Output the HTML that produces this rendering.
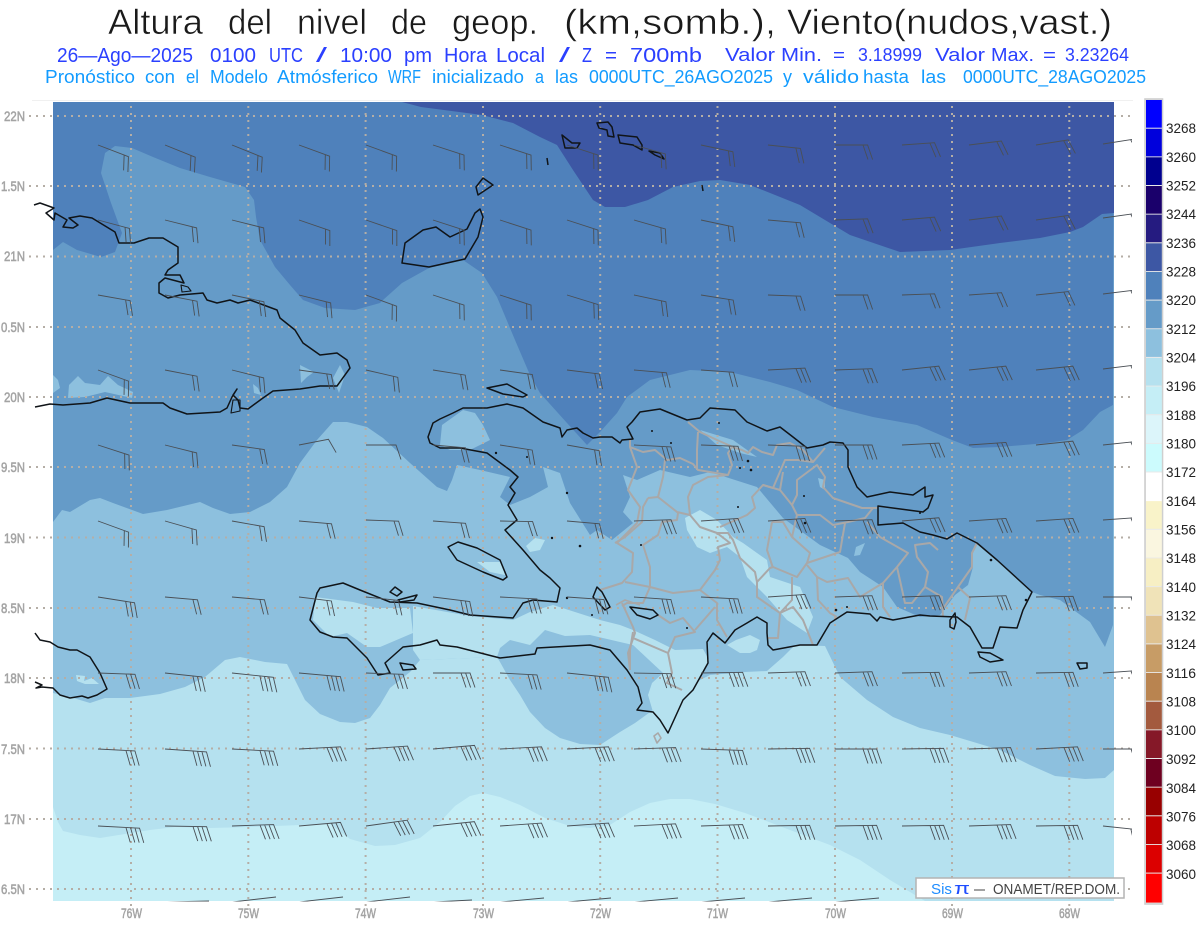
<!DOCTYPE html>
<html lang="es"><head><meta charset="utf-8"><title>Altura del nivel de geop.</title>
<style>html,body{margin:0;padding:0;background:#fff}svg{display:block;font-family:"Liberation Sans",sans-serif}</style></head>
<body>
<svg width="1200" height="927" viewBox="0 0 1200 927" xmlns="http://www.w3.org/2000/svg">
<defs>
<clipPath id="m"><rect x="53" y="102" width="1061" height="799"/></clipPath>
<clipPath id="bc"><rect x="53" y="102" width="1079" height="799.5"/></clipPath>
<path id="b1" d="M0,0H30L35,14.5"/>
<path id="b2" d="M0,0H32.6L37.6,14.5M28,0L33,14.5"/>
<path id="b3" d="M0,0H37L42,14.5M32.6,0L37.6,14.5M28,0L33,14.5"/>
<path id="b4" d="M0,0H41.6L46.6,14.5M37,0L42,14.5M32.6,0L37.6,14.5M28,0L33,14.5"/>
</defs>
<rect width="1200" height="927" fill="#fff"/>
<!-- titles -->
<g fill="#1a1a1a" font-size="35" stroke="#fff" stroke-width=".55" paint-order="fill">
<text x="108" y="34" textLength="95" lengthAdjust="spacingAndGlyphs">Altura</text>
<text x="228" y="34" textLength="44" lengthAdjust="spacingAndGlyphs">del</text>
<text x="297" y="34" textLength="70" lengthAdjust="spacingAndGlyphs">nivel</text>
<text x="391" y="34" textLength="36" lengthAdjust="spacingAndGlyphs">de</text>
<text x="452" y="34" textLength="86" lengthAdjust="spacingAndGlyphs">geop.</text>
<text x="564" y="34" textLength="212" lengthAdjust="spacingAndGlyphs">(km,somb.),</text>
<text x="787" y="34" textLength="325" lengthAdjust="spacingAndGlyphs">Viento(nudos,vast.)</text>
</g>
<g fill="#2b40ff" font-size="20">
<text x="57" y="62" textLength="136" lengthAdjust="spacingAndGlyphs">26—Ago—2025</text>
<text x="210" y="62" textLength="46" lengthAdjust="spacingAndGlyphs">0100</text>
<text x="269" y="62" textLength="34" lengthAdjust="spacingAndGlyphs">UTC</text>
<text x="316" y="62" textLength="11" lengthAdjust="spacingAndGlyphs">/</text>
<text x="340" y="62" textLength="52" lengthAdjust="spacingAndGlyphs">10:00</text>
<text x="404" y="62" textLength="28" lengthAdjust="spacingAndGlyphs">pm</text>
<text x="444" y="62" textLength="43" lengthAdjust="spacingAndGlyphs">Hora</text>
<text x="496" y="62" textLength="49" lengthAdjust="spacingAndGlyphs">Local</text>
<text x="559" y="62" textLength="11" lengthAdjust="spacingAndGlyphs">/</text>
<text x="582" y="62" textLength="10" lengthAdjust="spacingAndGlyphs">Z</text>
<text x="605" y="62" textLength="12" lengthAdjust="spacingAndGlyphs">=</text>
<text x="630" y="62" textLength="72" lengthAdjust="spacingAndGlyphs">700mb</text>
</g>
<g fill="#2b40ff" font-size="18">
<text x="725" y="61" textLength="50" lengthAdjust="spacingAndGlyphs">Valor</text>
<text x="781" y="61" textLength="41" lengthAdjust="spacingAndGlyphs">Min.</text>
<text x="833" y="61" textLength="12" lengthAdjust="spacingAndGlyphs">=</text>
<text x="858" y="61" textLength="64" lengthAdjust="spacingAndGlyphs">3.18999</text>
<text x="935" y="61" textLength="50" lengthAdjust="spacingAndGlyphs">Valor</text>
<text x="991" y="61" textLength="43" lengthAdjust="spacingAndGlyphs">Max.</text>
<text x="1043" y="61" textLength="13" lengthAdjust="spacingAndGlyphs">=</text>
<text x="1065" y="61" textLength="64" lengthAdjust="spacingAndGlyphs">3.23264</text>
</g>
<g fill="#129bff" font-size="18">
<text x="45" y="83" textLength="90" lengthAdjust="spacingAndGlyphs">Pronóstico</text>
<text x="145" y="83" textLength="30" lengthAdjust="spacingAndGlyphs">con</text>
<text x="186" y="83" textLength="13" lengthAdjust="spacingAndGlyphs">el</text>
<text x="210" y="83" textLength="58" lengthAdjust="spacingAndGlyphs">Modelo</text>
<text x="277" y="83" textLength="101" lengthAdjust="spacingAndGlyphs">Atmósferico</text>
<text x="388" y="83" textLength="33" lengthAdjust="spacingAndGlyphs">WRF</text>
<text x="432" y="83" textLength="92" lengthAdjust="spacingAndGlyphs">inicializado</text>
<text x="535" y="83" textLength="9" lengthAdjust="spacingAndGlyphs">a</text>
<text x="555" y="83" textLength="23" lengthAdjust="spacingAndGlyphs">las</text>
<text x="589" y="83" textLength="184" lengthAdjust="spacingAndGlyphs">0000UTC_26AGO2025</text>
<text x="783" y="83" textLength="9" lengthAdjust="spacingAndGlyphs">y</text>
<text x="803" y="83" textLength="56" lengthAdjust="spacingAndGlyphs">válido</text>
<text x="863" y="83" textLength="46" lengthAdjust="spacingAndGlyphs">hasta</text>
<text x="921" y="83" textLength="25" lengthAdjust="spacingAndGlyphs">las</text>
<text x="963" y="83" textLength="183" lengthAdjust="spacingAndGlyphs">0000UTC_28AGO2025</text>
</g>
<path d="M32,100.5H1133" stroke="#f0f0f0" fill="none"/>
<!-- shading -->
<g clip-path="url(#m)">
<rect x="53" y="102" width="1061" height="799" fill="#c5eef6"/>
<polygon fill="#b5e1ef" points="53,807 58,822 63,831 80,835 100,838 125,834 150,830 175,827 210,828 250,827 300,825 330,824 350,839 375,846 395,845 420,838 440,822 455,806 470,796 483,793 500,797 520,805 545,818 570,826 590,828 610,825 630,812 650,803 670,799 690,799 715,804 745,813 790,830 830,845 860,860 890,880 925,901 1114,901 1114,102 53,102"/>
<polygon fill="#8dc0de" points="53,102 53,693 70,697 90,703 105,698 130,698 160,694 185,687 205,677 225,660 240,657 265,662 287,664 295,680 305,700 320,714 340,722 355,723 370,718 380,705 390,688 400,680 410,672 420,660 497,657 500,662 510,680 520,695 530,712 545,728 560,738 580,744 600,745 620,732 635,723 653,710 680,690 710,675 745,672 767,671 783,657 795,645 825,646 840,677 867,700 893,717 920,728 950,735 1000,750 1030,765 1055,776 1085,779 1105,778 1114,770 1114,102"/>
<!-- b5 patches -->
<g fill="#b5e1ef">
<polygon points="413,606 470,616 513,620 530,612 553,605 575,612 600,620 620,625 633,630 655,640 675,650 703,649 709,660 693,690 668,733 653,712 648,695 652,683 663,673 633,645 620,642 590,635 565,636 545,630 530,645 510,640 500,648 497,657 420,660 413,650"/>
<polygon points="315,597 353,602 377,608 410,608 413,633 380,647 367,647 347,633 330,637 313,620"/>
<polygon points="477,562 500,562 505,575 490,572"/>
<polygon points="526,546 535,538 545,540 540,550 530,552"/>
<polygon points="685,518 700,510 717,520 733,537 743,543 757,553 767,560 770,577 800,587 813,617 807,633 787,620 767,597 747,577 740,557 727,547 710,553 697,547 687,530"/>
<polygon points="727,645 736,640 750,635 760,640 757,650 750,653 740,653"/>
<polygon points="76,675 85,676 84,681 92,678 99,684 85,684 77,681"/>
</g>
<polygon fill="#659bc8" points="53,102 53,522 62,510 70,512 90,500 100,498 113,503 143,514 167,510 200,502 213,508 230,514 250,512 270,502 287,487 300,463 317,440 333,422 347,422 367,427 383,438 410,463 437,487 447,491 452,480 457,465 480,470 510,477 500,497 510,505 530,497 548,487 543,467 560,473 570,503 590,535 597,530 612,540 633,523 623,512 630,497 623,475 637,480 660,470 690,477 710,472 757,487 783,518 820,545 848,558 860,572 883,587 897,607 920,617 940,615 955,595 968,585 973,567 972,553 978,543 997,560 1032,592 1040,595 1060,600 1090,622 1105,647 1113,625 1114,102"/>
<g fill="#8dc0de">
<polygon points="442,425 463,410 475,413 483,425 490,440 470,450 450,450 440,445"/>
<polygon points="53,375 58,380 60,388 53,393"/>
<polygon points="68,398 69,385 78,376 85,383 100,385 108,376 118,385 133,392 132,398 105,392 85,397"/>
<polygon points="300,365 314,372 307,377 301,383"/>
<polygon points="333,378 340,365 345,375 339,393"/>
<polygon points="253,384 258,388 261,395 254,393"/>
<polygon points="700,430 733,440 757,457 740,453 717,445"/>
<polygon points="856,547 865,543 860,555 854,556"/>
<polygon points="818,478 825,480 825,490 820,487"/>
</g>
<polygon fill="#4f81bb" points="53,102 53,250 63,242 77,250 101,257 115,252 122,233 111,203 101,173 105,153 115,146 132,148 153,157 180,168 210,177 245,187 254,200 256,217 260,240 275,267 290,285 303,300 325,308 355,310 380,303 383,300 402,283 429,268 463,260 482,273 497,297 515,340 530,375 540,393 567,423 587,445 600,432 617,413 627,397 650,380 690,370 730,372 770,382 797,390 833,407 873,417 917,425 952,440 973,448 1000,447 1047,443 1067,440 1083,430 1100,412 1113,405 1114,102"/>
<polygon fill="#3d57a4" points="402,102 421,107 482,115 513,123 540,137 557,145 573,170 593,200 605,207 625,207 648,200 673,187 700,181 720,180 750,185 800,205 850,235 900,252 950,250 1000,243 1040,238 1070,232 1083,227 1102,214 1114,213 1114,102"/>
</g>
<!-- grid -->
<g stroke="#b5aea6" stroke-width="2" stroke-dasharray="2 5" fill="none">
<path d="M29,116H1132M29,186H1132M29,256.5H1132M29,327H1132M29,397H1132M29,467H1132M29,537.5H1132M29,608H1132M29,678H1132M29,748.5H1132M29,819H1132M29,889H1132"/>
<path d="M131,106V907M248.3,106V907M365.6,106V907M483,106V907M600.2,106V907M717.5,106V907M835,106V907M952,106V907M1069.3,106V907"/>
</g>
<!-- provinces -->
<g fill="none" stroke="#a9a8a8" stroke-width="2" stroke-linejoin="round">
<path d="M630,440L630,447L637,467L628,490L640,507L637,523L617,543L633,553L632,572L622,583L600,590M622,603L633,627L635,633L628,653L630,670"/>
<path d="M630,447L643,452L655,450L667,460L680,458L693,464L698,470L710,472L728,475L732,465L728,453L732,447L742,450L748,453L753,447L762,452L773,455L777,445L790,443L803,450L813,462L825,448"/>
<path d="M688,422L700,432L717,440L733,447M698,432L697,450L697,470M665,460L663,477L658,497"/>
<path d="M648,498L643,507L642,522L625,537L615,543M648,498L658,497L677,512L690,515L688,497L693,485L708,477L728,475"/>
<path d="M690,515L700,527L717,533L728,533L733,540L740,558L755,572L757,582L770,568L773,567L797,577L807,563"/>
<path d="M678,513L677,520L662,522L658,535L643,545L650,567L650,587L673,593L700,590L715,570L720,560L718,547L730,543L717,533"/>
<path d="M625,582L650,587L643,603L627,603L622,606M700,590L717,603L717,620L727,637"/>
<path d="M658,615L670,623L683,618L695,632L675,637L668,653L672,673L667,683L682,690M715,607L695,630M633,632L630,650L630,670M633,638L668,653"/>
<path d="M720,527L747,515L755,508L752,497L763,485L773,488L785,460L798,460L813,462"/>
<path d="M763,485L780,490L783,472M780,490L792,505L797,495L797,480L817,465L825,477L823,487L833,498L862,508L877,508"/>
<path d="M792,505L797,515L792,537L810,553L807,563L840,552L845,523M797,515L820,515L833,525L848,522L865,518L873,508"/>
<path d="M772,522L783,522L792,537M772,522L767,550L773,568"/>
<path d="M867,522L880,537L908,553L897,567L883,583L883,607L890,617M807,565L817,577L827,582L848,578L860,597L883,583"/>
<path d="M817,577L818,600L830,613L837,617M792,577L792,600L780,613L778,638L767,638M757,582L757,597L780,613L793,607L803,620L813,645"/>
<path d="M897,567L905,603L912,603L925,587L928,572L917,557L915,545L930,543L938,550M925,587L942,597L943,617M942,610L958,587L970,598L965,620M958,587L972,567L972,553L977,543"/>
<path d="M616,605L625,600L640,605" stroke-width="1.6"/>
<path d="M654,736L658,733L661,738L657,743Z" stroke-width="1.6"/>
</g>
<!-- coast -->
<g fill="none" stroke="#101418" stroke-width="1.5" stroke-linejoin="round">
<path d="M428,437L433,423L440,419L453,413L463,408L487,408L507,404L523,408L543,422L560,428L562,437L567,430L577,428L583,433L593,438L600,437L612,437L620,443L622,440L633,439L627,427L632,422L640,412L660,409L687,420L700,418L710,408L735,410L747,422L767,431L780,427L793,437L807,448L823,445L830,442L843,443L848,450L848,467L857,487L867,497L890,492L913,495L925,487L925,497L933,495L928,508L923,512L878,506L878,525L903,523L920,532L933,535L947,539L957,533L977,543L997,560L1032,592L1023,610L1017,628L1000,627L993,648L982,648L970,627L957,617L930,616L920,615L893,620L880,617L877,621L870,614L847,612L830,623L817,645L800,645L773,650L768,645L767,633L767,623L757,617L747,623L735,630L725,643L713,633L707,642L708,663L693,690L683,700L668,733L660,720L653,712L637,710L642,703L638,687L627,670L610,650L590,645L537,648L535,654L500,658L457,647L440,645L437,640L420,645L403,647L385,663L390,673L378,675L367,658L347,638L333,637L320,632L310,620L317,593L320,588L343,583L360,590L390,602L417,603L450,610L470,615L513,618L523,603L533,600L557,602L560,588L550,578L540,570L523,550L505,530L517,520L508,505L515,493L510,487L518,477L510,470L487,453L460,448L440,448L430,443Z"/>
<path d="M448,547L458,542L477,548L500,560L507,577L503,580L483,572L457,560Z"/>
<path d="M487,388L507,384L527,395L523,397L503,394Z"/>
<path d="M597,587L593,597L605,610L610,607L602,592Z"/>
<path d="M630,607L653,610L658,615L650,619L637,615Z"/>
<path d="M978,652L990,653L1003,660L990,662L980,657Z"/>
<path d="M955,613L950,620L950,627L954,629L956,622Z"/>
<path d="M390,592L395,587L402,592L397,596Z"/>
<path d="M398,600L417,595L414,600L400,602Z"/>
<path d="M400,663L413,665L416,669L403,670Z"/>
<path d="M1077,663L1087,663L1087,668L1080,669Z"/>
<path d="M34,205L40,203L54,208L46,213L54,220L55,213L67,220L63,227L73,228L78,225L69,218L80,216L92,218L115,232L119,243L134,243L149,238L163,238L178,247L178,263L168,270L165,275L180,275L184,283L165,278L159,283L159,293L168,298L180,295L203,293L207,300L217,303L230,300L238,303L250,300L277,310L280,318L295,330L303,343L320,355L337,353L347,360L350,368L337,386L320,386L300,389L273,391L263,398L248,409L240,408L238,400L233,395L237,389L232,397L227,408L220,412L187,414L170,408L163,403L143,403L130,403L107,398L90,403L63,405L50,404L35,407"/>
<path d="M233,400L240,400L240,411L231,413ZM181,285L188,287L191,291L182,292Z" stroke-width="1.1"/>
<path d="M480,209L483,217L478,237L465,259L429,267L402,263L405,243L423,230L436,227L450,237L467,229L475,213Z"/>
<path d="M483,178L493,185L478,195L476,187Z"/>
<path d="M562,135L572,143L580,143L577,148L565,148Z"/>
<path d="M597,123L608,122L612,127L614,137L608,136L607,130L599,128Z"/>
<path d="M618,135L637,137L642,145L642,150L633,145L620,143Z"/>
<path d="M649,151L660,153L664,159L655,155Z"/>
<path d="M35,633L40,640L50,642L58,647L70,650L77,650L90,657L100,673L107,689L97,695L88,698L82,696L70,698L60,695L53,688L42,687L36,688L42,685L35,682"/>
<path d="M547,158L548,165M702,185L703,191"/>
</g>
<g fill="#101418">
<circle cx="652" cy="431" r="1"/><circle cx="671" cy="443" r="1"/><circle cx="719" cy="423" r="1"/><circle cx="748" cy="461" r="1.3"/><circle cx="740" cy="468" r="1"/><circle cx="751" cy="470" r="1.3"/><circle cx="804" cy="496" r="1"/><circle cx="738" cy="507" r="1"/><circle cx="641" cy="545" r="1"/><circle cx="805" cy="523" r="1.3"/><circle cx="991" cy="560" r="1.3"/><circle cx="1026" cy="600" r="1.3"/><circle cx="836" cy="610" r="1.3"/><circle cx="847" cy="607" r="1"/><circle cx="920" cy="513" r="1"/><circle cx="496" cy="453" r="1.2"/><circle cx="527" cy="457" r="1"/><circle cx="567" cy="493" r="1.2"/><circle cx="552" cy="538" r="1.2"/><circle cx="580" cy="546" r="1.3"/><circle cx="567" cy="598" r="1.2"/><circle cx="592" cy="615" r="1"/><circle cx="687" cy="628" r="1"/>
</g>
<!-- barbs -->
<g clip-path="url(#bc)" fill="none" stroke="#4a4f55" stroke-width=".9">
<use href="#b2" transform="translate(98,145) rotate(21)"/><use href="#b2" transform="translate(165,145) rotate(22)"/><use href="#b2" transform="translate(232,145) rotate(22)"/><use href="#b2" transform="translate(299,145) rotate(20)"/><use href="#b2" transform="translate(366,145) rotate(20)"/><use href="#b2" transform="translate(433,145) rotate(18)"/><use href="#b2" transform="translate(500,145) rotate(18)"/><use href="#b2" transform="translate(567,145) rotate(18)"/><use href="#b2" transform="translate(634,145) rotate(16)"/><use href="#b2" transform="translate(701,145) rotate(12)"/><use href="#b2" transform="translate(768,145) rotate(6)"/><use href="#b2" transform="translate(835,145) rotate(0)"/><use href="#b2" transform="translate(902,145) rotate(-4)"/><use href="#b2" transform="translate(969,145) rotate(-7)"/><use href="#b2" transform="translate(1036,145) rotate(-9)"/><use href="#b2" transform="translate(1103,144) rotate(-9)"/>
<use href="#b2" transform="translate(98,220) rotate(15)"/><use href="#b2" transform="translate(165,220) rotate(14)"/><use href="#b2" transform="translate(232,220) rotate(14)"/><use href="#b2" transform="translate(299,220) rotate(19)"/><use href="#b2" transform="translate(366,220) rotate(19)"/><use href="#b2" transform="translate(433,220) rotate(18)"/><use href="#b2" transform="translate(500,220) rotate(18)"/><use href="#b2" transform="translate(567,220) rotate(18)"/><use href="#b2" transform="translate(634,220) rotate(16)"/><use href="#b2" transform="translate(701,220) rotate(12)"/><use href="#b2" transform="translate(768,220) rotate(5)"/><use href="#b2" transform="translate(835,220) rotate(-2)"/><use href="#b2" transform="translate(902,220) rotate(-5)"/><use href="#b2" transform="translate(969,220) rotate(-7)"/><use href="#b2" transform="translate(1036,220) rotate(-8)"/><use href="#b2" transform="translate(1103,218) rotate(-8)"/>
<use href="#b2" transform="translate(98,295) rotate(10)"/><use href="#b2" transform="translate(165,295) rotate(11)"/><use href="#b2" transform="translate(232,295) rotate(12)"/><use href="#b2" transform="translate(299,295) rotate(14)"/><use href="#b2" transform="translate(366,295) rotate(20)"/><use href="#b2" transform="translate(433,295) rotate(18)"/><use href="#b2" transform="translate(500,295) rotate(18)"/><use href="#b2" transform="translate(567,295) rotate(17)"/><use href="#b2" transform="translate(634,295) rotate(12)"/><use href="#b2" transform="translate(701,295) rotate(9)"/><use href="#b2" transform="translate(768,295) rotate(2)"/><use href="#b2" transform="translate(835,295) rotate(0)"/><use href="#b2" transform="translate(902,295) rotate(-2)"/><use href="#b2" transform="translate(969,295) rotate(-4)"/><use href="#b2" transform="translate(1036,295) rotate(-6)"/><use href="#b2" transform="translate(1103,294) rotate(-7)"/>
<use href="#b2" transform="translate(98,370) rotate(20)"/><use href="#b2" transform="translate(165,370) rotate(11)"/><use href="#b2" transform="translate(232,370) rotate(14)"/><use href="#b2" transform="translate(299,370) rotate(8)"/><use href="#b2" transform="translate(366,370) rotate(13)"/><use href="#b2" transform="translate(433,370) rotate(9)"/><use href="#b2" transform="translate(500,370) rotate(8)"/><use href="#b2" transform="translate(567,370) rotate(7)"/><use href="#b2" transform="translate(634,370) rotate(5)"/><use href="#b2" transform="translate(701,370) rotate(4)"/><use href="#b3" transform="translate(768,370) rotate(-3)"/><use href="#b3" transform="translate(835,370) rotate(-2)"/><use href="#b3" transform="translate(902,370) rotate(-6)"/><use href="#b3" transform="translate(969,370) rotate(-6)"/><use href="#b3" transform="translate(1036,370) rotate(-6)"/><use href="#b3" transform="translate(1103,369) rotate(-7)"/>
<use href="#b2" transform="translate(98,445) rotate(18)"/><use href="#b2" transform="translate(165,445) rotate(14)"/><use href="#b2" transform="translate(232,445) rotate(8)"/><use href="#b1" transform="translate(299,445) rotate(-11)"/><use href="#b1" transform="translate(366,445) rotate(0)"/><use href="#b2" transform="translate(433,445) rotate(5)"/><use href="#b2" transform="translate(500,445) rotate(9)"/><use href="#b2" transform="translate(567,445) rotate(10)"/><use href="#b3" transform="translate(634,445) rotate(3)"/><use href="#b3" transform="translate(701,445) rotate(2)"/><use href="#b3" transform="translate(768,445) rotate(2)"/><use href="#b3" transform="translate(835,445) rotate(0)"/><use href="#b3" transform="translate(902,445) rotate(-3)"/><use href="#b3" transform="translate(969,445) rotate(-4)"/><use href="#b3" transform="translate(1036,445) rotate(-6)"/><use href="#b3" transform="translate(1103,445) rotate(-6)"/>
<use href="#b2" transform="translate(98,521) rotate(20)"/><use href="#b2" transform="translate(165,521) rotate(16)"/><use href="#b2" transform="translate(232,521) rotate(10)"/><use href="#b2" transform="translate(299,521) rotate(5)"/><use href="#b2" transform="translate(366,520) rotate(2)"/><use href="#b2" transform="translate(433,521) rotate(4)"/><use href="#b2" transform="translate(500,521) rotate(1)"/><use href="#b2" transform="translate(567,521) rotate(5)"/><use href="#b3" transform="translate(634,521) rotate(-2)"/><use href="#b3" transform="translate(701,521) rotate(-4)"/><use href="#b3" transform="translate(768,521) rotate(-4)"/><use href="#b3" transform="translate(835,521) rotate(-2)"/><use href="#b3" transform="translate(902,521) rotate(-5)"/><use href="#b3" transform="translate(969,521) rotate(-4)"/><use href="#b3" transform="translate(1036,521) rotate(-4)"/><use href="#b3" transform="translate(1103,520) rotate(-4)"/>
<use href="#b3" transform="translate(98,597) rotate(9)"/><use href="#b2" transform="translate(165,597) rotate(5)"/><use href="#b2" transform="translate(232,597) rotate(5)"/><use href="#b2" transform="translate(299,597) rotate(7)"/><use href="#b2" transform="translate(366,597) rotate(6)"/><use href="#b3" transform="translate(433,597) rotate(7)"/><use href="#b3" transform="translate(500,597) rotate(3)"/><use href="#b3" transform="translate(567,597) rotate(4)"/><use href="#b3" transform="translate(634,597) rotate(4)"/><use href="#b3" transform="translate(701,597) rotate(3)"/><use href="#b3" transform="translate(768,597) rotate(-4)"/><use href="#b3" transform="translate(835,597) rotate(-2)"/><use href="#b3" transform="translate(902,597) rotate(-2)"/><use href="#b3" transform="translate(969,597) rotate(-2)"/><use href="#b3" transform="translate(1036,597) rotate(-1)"/><use href="#b3" transform="translate(1103,597) rotate(0)"/>
<use href="#b3" transform="translate(98,673) rotate(2)"/><use href="#b3" transform="translate(165,673) rotate(6)"/><use href="#b4" transform="translate(232,673) rotate(6)"/><use href="#b4" transform="translate(299,673) rotate(5)"/><use href="#b3" transform="translate(366,673) rotate(2)"/><use href="#b3" transform="translate(433,673) rotate(0)"/><use href="#b3" transform="translate(500,673) rotate(3)"/><use href="#b4" transform="translate(567,673) rotate(6)"/><use href="#b3" transform="translate(634,673) rotate(1)"/><use href="#b4" transform="translate(701,673) rotate(-1)"/><use href="#b3" transform="translate(768,673) rotate(-2)"/><use href="#b3" transform="translate(835,673) rotate(-2)"/><use href="#b3" transform="translate(902,673) rotate(-1)"/><use href="#b3" transform="translate(969,673) rotate(-2)"/><use href="#b3" transform="translate(1036,673) rotate(-1)"/><use href="#b3" transform="translate(1103,673) rotate(-4)"/>
<use href="#b3" transform="translate(98,749) rotate(3)"/><use href="#b4" transform="translate(165,749) rotate(4)"/><use href="#b4" transform="translate(232,749) rotate(3)"/><use href="#b4" transform="translate(299,749) rotate(-3)"/><use href="#b4" transform="translate(366,749) rotate(-4)"/><use href="#b4" transform="translate(433,749) rotate(-5)"/><use href="#b4" transform="translate(500,749) rotate(-3)"/><use href="#b4" transform="translate(567,749) rotate(-3)"/><use href="#b4" transform="translate(634,749) rotate(-2)"/><use href="#b4" transform="translate(701,749) rotate(2)"/><use href="#b4" transform="translate(768,749) rotate(-1)"/><use href="#b4" transform="translate(835,749) rotate(0)"/><use href="#b4" transform="translate(902,749) rotate(-1)"/><use href="#b4" transform="translate(969,749) rotate(-2)"/><use href="#b4" transform="translate(1036,749) rotate(-3)"/><use href="#b3" transform="translate(1103,749) rotate(0)"/>
<use href="#b4" transform="translate(98,826) rotate(3)"/><use href="#b4" transform="translate(165,826) rotate(1)"/><use href="#b4" transform="translate(232,826) rotate(-2)"/><use href="#b4" transform="translate(299,826) rotate(-5)"/><use href="#b4" transform="translate(366,826) rotate(-8)"/><use href="#b4" transform="translate(433,826) rotate(-6)"/><use href="#b4" transform="translate(500,826) rotate(-4)"/><use href="#b4" transform="translate(567,826) rotate(-4)"/><use href="#b4" transform="translate(634,826) rotate(-3)"/><use href="#b4" transform="translate(701,826) rotate(-2)"/><use href="#b4" transform="translate(768,826) rotate(-1)"/><use href="#b4" transform="translate(835,826) rotate(-1)"/><use href="#b4" transform="translate(902,826) rotate(-1)"/><use href="#b4" transform="translate(969,826) rotate(-2)"/><use href="#b4" transform="translate(1036,826) rotate(-1)"/><use href="#b4" transform="translate(1103,826) rotate(6)"/>
<path d="M165,902L209,901M232,902L276,897M299,902L343,897M366,902L410,897M433,902L472,900M500,902L544,898M567,902L611,898M634,902L678,898M701,902L745,898M768,902L812,898M835,902L879,898"/>
</g>
<!-- axis labels -->
<g fill="#a4a4a4" font-size="14" stroke="#a4a4a4" stroke-width=".55">
<text x="4" y="121" textLength="21" lengthAdjust="spacingAndGlyphs">22N</text>
<text x="1" y="191" textLength="24" lengthAdjust="spacingAndGlyphs">1.5N</text>
<text x="4" y="261" textLength="21" lengthAdjust="spacingAndGlyphs">21N</text>
<text x="1" y="332" textLength="24" lengthAdjust="spacingAndGlyphs">0.5N</text>
<text x="4" y="402" textLength="21" lengthAdjust="spacingAndGlyphs">20N</text>
<text x="1" y="472" textLength="24" lengthAdjust="spacingAndGlyphs">9.5N</text>
<text x="4" y="543" textLength="21" lengthAdjust="spacingAndGlyphs">19N</text>
<text x="1" y="613" textLength="24" lengthAdjust="spacingAndGlyphs">8.5N</text>
<text x="4" y="683" textLength="21" lengthAdjust="spacingAndGlyphs">18N</text>
<text x="1" y="754" textLength="24" lengthAdjust="spacingAndGlyphs">7.5N</text>
<text x="4" y="824" textLength="21" lengthAdjust="spacingAndGlyphs">17N</text>
<text x="1" y="894" textLength="24" lengthAdjust="spacingAndGlyphs">6.5N</text>
<text x="121" y="918" textLength="21" lengthAdjust="spacingAndGlyphs">76W</text>
<text x="238" y="918" textLength="21" lengthAdjust="spacingAndGlyphs">75W</text>
<text x="355" y="918" textLength="21" lengthAdjust="spacingAndGlyphs">74W</text>
<text x="473" y="918" textLength="21" lengthAdjust="spacingAndGlyphs">73W</text>
<text x="590" y="918" textLength="21" lengthAdjust="spacingAndGlyphs">72W</text>
<text x="707" y="918" textLength="21" lengthAdjust="spacingAndGlyphs">71W</text>
<text x="825" y="918" textLength="21" lengthAdjust="spacingAndGlyphs">70W</text>
<text x="942" y="918" textLength="21" lengthAdjust="spacingAndGlyphs">69W</text>
<text x="1059" y="918" textLength="21" lengthAdjust="spacingAndGlyphs">68W</text>
</g>
<!-- logo box -->
<rect x="916" y="878" width="208" height="20" fill="#fff" stroke="#b4b4b4" stroke-width="1.5"/>
<text x="931" y="894" font-size="15" fill="#1e8cff" textLength="21" lengthAdjust="spacingAndGlyphs">Sis</text>
<text x="954" y="894" font-size="17" fill="#1e4cff" textLength="16" lengthAdjust="spacingAndGlyphs">π</text>
<text x="974" y="894" font-size="15" fill="#444" textLength="11" lengthAdjust="spacingAndGlyphs">—</text>
<text x="993" y="894" font-size="15" fill="#444" textLength="127" lengthAdjust="spacingAndGlyphs">ONAMET/REP.DOM.</text>
<!-- colour bar -->
<rect x="1145" y="99" width="17.5" height="805" fill="#e9e9e9" stroke="#cfcfcf" stroke-width="1.6"/>
<g>
<rect x="1146" y="100" width="15.8" height="27.7" fill="#0000ff"/>
<rect x="1146" y="128.7" width="15.8" height="27.7" fill="#0000dc"/>
<rect x="1146" y="157.3" width="15.8" height="27.7" fill="#00008f"/>
<rect x="1146" y="186" width="15.8" height="27.7" fill="#1a006b"/>
<rect x="1146" y="214.6" width="15.8" height="27.7" fill="#251b80"/>
<rect x="1146" y="243.3" width="15.8" height="27.7" fill="#3d57a4"/>
<rect x="1146" y="271.9" width="15.8" height="27.7" fill="#4f81bb"/>
<rect x="1146" y="300.6" width="15.8" height="27.7" fill="#659bc8"/>
<rect x="1146" y="329.2" width="15.8" height="27.7" fill="#8dc0de"/>
<rect x="1146" y="357.9" width="15.8" height="27.7" fill="#b5e1ef"/>
<rect x="1146" y="386.5" width="15.8" height="27.7" fill="#c5eef6"/>
<rect x="1146" y="415.2" width="15.8" height="27.7" fill="#dcf5fa"/>
<rect x="1146" y="443.8" width="15.8" height="27.7" fill="#ccfbfd"/>
<rect x="1146" y="472.5" width="15.8" height="29" fill="#ffffff"/>
<rect x="1146" y="501.1" width="15.8" height="27.7" fill="#f9f3c9"/>
<rect x="1146" y="529.8" width="15.8" height="27.7" fill="#faf6e0"/>
<rect x="1146" y="558.4" width="15.8" height="27.7" fill="#f7efc4"/>
<rect x="1146" y="587.1" width="15.8" height="27.7" fill="#f0e3b8"/>
<rect x="1146" y="615.7" width="15.8" height="27.7" fill="#dfc290"/>
<rect x="1146" y="644.4" width="15.8" height="27.7" fill="#c79c66"/>
<rect x="1146" y="673" width="15.8" height="27.7" fill="#b98450"/>
<rect x="1146" y="701.7" width="15.8" height="27.7" fill="#a35a3e"/>
<rect x="1146" y="730.3" width="15.8" height="27.7" fill="#851828"/>
<rect x="1146" y="759" width="15.8" height="27.7" fill="#6e0020"/>
<rect x="1146" y="787.6" width="15.8" height="27.7" fill="#980000"/>
<rect x="1146" y="816.3" width="15.8" height="27.7" fill="#bd0000"/>
<rect x="1146" y="844.9" width="15.8" height="27.7" fill="#dc0000"/>
<rect x="1146" y="873.6" width="15.8" height="29" fill="#ff0000"/>
</g>
<g fill="#222" font-size="14">
<text x="1166" y="133" textLength="30" lengthAdjust="spacingAndGlyphs">3268</text>
<text x="1166" y="162" textLength="30" lengthAdjust="spacingAndGlyphs">3260</text>
<text x="1166" y="190.500" textLength="30" lengthAdjust="spacingAndGlyphs">3252</text>
<text x="1166" y="219" textLength="30" lengthAdjust="spacingAndGlyphs">3244</text>
<text x="1166" y="248" textLength="30" lengthAdjust="spacingAndGlyphs">3236</text>
<text x="1166" y="276.500" textLength="30" lengthAdjust="spacingAndGlyphs">3228</text>
<text x="1166" y="305" textLength="30" lengthAdjust="spacingAndGlyphs">3220</text>
<text x="1166" y="334" textLength="30" lengthAdjust="spacingAndGlyphs">3212</text>
<text x="1166" y="362.500" textLength="30" lengthAdjust="spacingAndGlyphs">3204</text>
<text x="1166" y="391" textLength="30" lengthAdjust="spacingAndGlyphs">3196</text>
<text x="1166" y="420" textLength="30" lengthAdjust="spacingAndGlyphs">3188</text>
<text x="1166" y="448.500" textLength="30" lengthAdjust="spacingAndGlyphs">3180</text>
<text x="1166" y="477" textLength="30" lengthAdjust="spacingAndGlyphs">3172</text>
<text x="1166" y="506" textLength="30" lengthAdjust="spacingAndGlyphs">3164</text>
<text x="1166" y="534.500" textLength="30" lengthAdjust="spacingAndGlyphs">3156</text>
<text x="1166" y="563" textLength="30" lengthAdjust="spacingAndGlyphs">3148</text>
<text x="1166" y="592" textLength="30" lengthAdjust="spacingAndGlyphs">3140</text>
<text x="1166" y="620.500" textLength="30" lengthAdjust="spacingAndGlyphs">3132</text>
<text x="1166" y="649" textLength="30" lengthAdjust="spacingAndGlyphs">3124</text>
<text x="1166" y="678" textLength="30" lengthAdjust="spacingAndGlyphs">3116</text>
<text x="1166" y="706.500" textLength="30" lengthAdjust="spacingAndGlyphs">3108</text>
<text x="1166" y="735" textLength="30" lengthAdjust="spacingAndGlyphs">3100</text>
<text x="1166" y="764" textLength="30" lengthAdjust="spacingAndGlyphs">3092</text>
<text x="1166" y="793" textLength="30" lengthAdjust="spacingAndGlyphs">3084</text>
<text x="1166" y="821.500" textLength="30" lengthAdjust="spacingAndGlyphs">3076</text>
<text x="1166" y="850" textLength="30" lengthAdjust="spacingAndGlyphs">3068</text>
<text x="1166" y="879" textLength="30" lengthAdjust="spacingAndGlyphs">3060</text>
</g>
</svg>
</body></html>
